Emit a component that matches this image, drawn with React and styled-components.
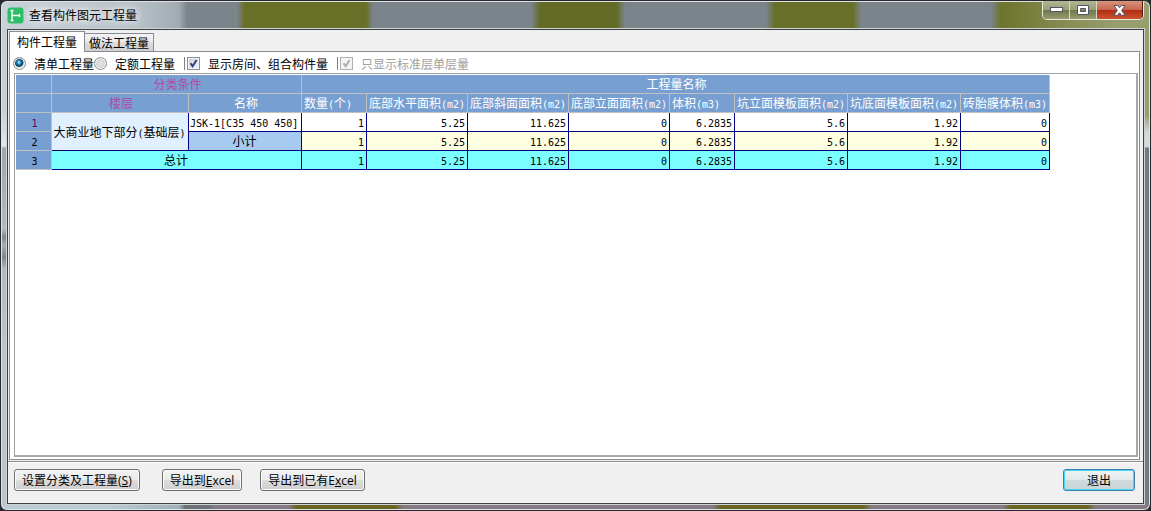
import React, { useState } from "react";
import styled, { createGlobalStyle, css } from "styled-components";

const GlobalStyle = createGlobalStyle`
  * {
    box-sizing: border-box;
  }

  body {
    margin: 0;
    background: #2a2a2a;
    color: #000;
    font-family: "Noto Sans CJK SC", sans-serif;
    font-size: 12px;
    line-height: 18px;
  }

  button,
  input {
    font: inherit;
    margin: 0;
  }
`;

const Window = styled.div`
  display: flex;
  flex-direction: column;
  min-height: 100vh;
  padding: 0 6px 6px;
  border: 1px solid #26282c;
  border-radius: 7px;
  box-shadow: inset 0 0 0 1px #dde3e6;
  background:
    linear-gradient(90deg, #b9cad2 0 110px, #9fb0b8 178px, #6f7274 184px 208px, #857a82 214px 288px, #6a6420 296px 394px, #857a82 402px 712px, #6a6420 720px 862px, #857a82 870px 1002px, #6a6420 1010px 1086px, #857a82 1094px) bottom / 100% 7px no-repeat,
    linear-gradient(180deg, #979d6c 0 86px, #d5d9dc 104px 118px, #727b82 119px) right 28px / 7px 100% no-repeat,
    linear-gradient(180deg, #c3cfd7 0 80px, #e4e8ea 117px, #9ba8b0 119px, #aebbc3 200px, #7d8990 208px, #a3b0b8 216px, #7d8990 228px, #aebbc3 240px, #b9c6cf 320px) left 28px / 7px 100% no-repeat,
    linear-gradient(90deg, #c9d2d9 0, #b5bfc6 140px, #a2abb2 178px, #7b838b 186px 236px, #686f26 244px 365px, #7b838b 372px 530px, #646b26 539px 616px, #7b838b 624px 765px, #686f28 774px 852px, #7b838b 860px 990px, #6d742c 1000px, #979d6c 1110px) top / 100% 28px no-repeat,
    #b9c6cf;
`;

const TitleBar = styled.header`
  display: flex;
  align-items: flex-start;
  justify-content: space-between;
  height: 28px;
`;

const Title = styled.h1`
  display: flex;
  align-items: center;
  gap: 5px;
  height: 28px;
  margin: 0;
  font-size: 12px;
  font-weight: 400;
  text-shadow: 0 0 8px #fff, 0 0 8px #fff;
`;

const CaptionButtons = styled.div`
  display: flex;
  border: 1px solid #e8ebdc;
  border-top: 0;
  border-radius: 0 0 5px 5px;
  overflow: hidden;
`;

const CaptionButton = styled.button`
  display: flex;
  align-items: center;
  justify-content: center;
  width: ${props => (props.$close ? 46 : 27)}px;
  height: 18px;
  padding: 0;
  border: 0;
  border-right: 1px solid ${props => (props.$close ? "#5b1a10" : "#d6dac2")};
  background: ${props =>
    props.$close
      ? "linear-gradient(#d9937f, #c7664c 50%, #ad2f12 50%, #d0512e)"
      : "linear-gradient(#b2b694, #989d75 50%, #70754a 50%, #979c70)"};
`;

const Client = styled.main`
  display: flex;
  flex: 1;
  flex-direction: column;
  border: 1px solid #3c4143;
  box-shadow: 0 0 0 1px #ccd3d3;
  background: #f0f0f0;
`;

const Tabs = styled.div`
  display: flex;
  align-items: flex-end;
  height: 21px;
  padding: 0 1px;
`;

const Tab = styled.button`
  position: relative;
  height: 18px;
  padding: 0 4px;
  border: 1px solid #898c95;
  border-bottom: 0;
  border-left: 0;
  background: linear-gradient(#f2f2f2, #ebebeb 50%, #dddddd 50%, #cfcfcf);

  ${props =>
    props.$active &&
    css`
      z-index: 1;
      height: 21px;
      margin-bottom: -1px;
      padding: 0 7px;
      border-left: 1px solid #898c95;
      background: #fff;
    `}
`;

const Panel = styled.section`
  display: flex;
  flex: 1;
  flex-direction: column;
  margin: 0 3px 1px 1px;
  padding: 0 1px 2px 3px;
  border: 1px solid #898c95;
  background: #fff;
`;

const Options = styled.div`
  display: flex;
  align-items: center;
  height: 21px;
  padding-top: 2px;
`;

const Option = styled.label`
  display: flex;
  align-items: center;
  gap: 8px;
  color: ${props => (props.$disabled ? "#a0a0a0" : "#000")};
`;

const Radio = styled.input`
  appearance: none;
  width: 13px;
  height: 13px;
  border: 1px solid #8e8f8f;
  border-radius: 50%;
  background: radial-gradient(#e4e4e4, #c9ccce);
  box-shadow: inset 0 0 0 1px #f4f4f4;

  &:checked {
    background: radial-gradient(circle at 45% 40%, #7fd0f2 0 1px, #1b7db5 2px, #123a5e 4px, #dfe3e6 5px);
  }
`;

const Checkbox = styled.input`
  appearance: none;
  width: 13px;
  height: 13px;
  border: 1px solid #8e8f8f;
  background: linear-gradient(135deg, #c9cdd3, #f6f6f6);
  box-shadow: inset 0 0 0 1px #f4f4f4;

  &:checked {
    background:
      url("data:image/svg+xml,%3Csvg xmlns='http://www.w3.org/2000/svg' viewBox='0 0 11 11'%3E%3Cpath d='M2.5 5.2 4.6 8.2 8.6 2' fill='none' stroke='%23303f8c' stroke-width='2'/%3E%3C/svg%3E"),
      linear-gradient(135deg, #c9cdd3, #f6f6f6);
  }

  &:disabled {
    border-color: #b1b1b1;
    background:
      url("data:image/svg+xml,%3Csvg xmlns='http://www.w3.org/2000/svg' viewBox='0 0 11 11'%3E%3Cpath d='M2.5 5.2 4.6 8.2 8.6 2' fill='none' stroke='%23b0b0b0' stroke-width='2'/%3E%3C/svg%3E"),
      #f4f4f4;
  }
`;

const Divider = styled.span`
  width: 1px;
  height: 13px;
  margin: 0 2px 0 9px;
  background: #808080;
`;

const GridFrame = styled.div`
  flex: 1;
  margin-left: 1px;
  padding: 1px;
  border: 1px solid #a0a0a0;
  border-right: 2px solid #a9a9a9;
  border-bottom: 2px solid #a9a9a9;
`;

const Table = styled.table`
  width: 1034px;
  table-layout: fixed;
  border-collapse: separate;
  border-spacing: 0;
  line-height: 16px;
`;

const Col = styled.col`
  width: ${props => props.$width}px;
`;

const HeadCell = styled.th`
  height: 19px;
  padding: 0 0 0 2px;
  overflow: hidden;
  border-right: 1px solid #c0c0c0;
  border-bottom: 1px solid #c0c0c0;
  background: #789fd2;
  color: ${props => props.$color || "#fff"};
  font-weight: 400;
  text-align: ${props => props.$align || "center"};
  white-space: nowrap;
`;

const Cell = styled.td`
  height: 19px;
  padding: 0 2px 0 1px;
  overflow: hidden;
  border-right: 1px solid #000080;
  border-bottom: 1px solid #000080;
  background: ${props => props.$bg || "#fff"};
  text-align: ${props => props.$align || "center"};
  white-space: nowrap;
`;

const Mono = styled.span`
  font-family: "DejaVu Sans Mono", monospace;
  font-size: 10px;
  line-height: 12px;
`;

const Footer = styled.footer`
  display: flex;
  align-items: flex-start;
  justify-content: space-between;
  height: 42px;
  padding: 7px 8px 0 6px;
  border-top: 1px solid #8c8c8c;
  box-shadow: inset 0 1px 0 #fff;
`;

const ButtonGroup = styled.div`
  display: flex;
  gap: ${props => props.$gap}px;
`;

const Button = styled.button`
  height: 22px;
  padding: 0 7px;
  border: 1px solid #707070;
  border-radius: 3px;
  background: linear-gradient(#f2f2f2, #ebebeb 50%, #dddddd 50%, #cfcfcf);
  box-shadow: inset 0 0 0 1px #fafafa;
  line-height: 20px;
  white-space: nowrap;

  ${props =>
    props.$primary &&
    css`
      padding: 0 23px;
      border-color: #3c7fb1;
      box-shadow: inset 0 0 0 1px #46d8fb;
      background: linear-gradient(#eef2f3, #e3eaec 50%, #d0dadd 50%, #cbd5d8);
    `}
`;

const Latin = styled.span`
  font-family: "Open Sans", sans-serif;
`;

const columns = [
  { name: "数量", unit: "个", width: 65 },
  { name: "底部水平面积", unit: <Mono>m2</Mono>, width: 101 },
  { name: "底部斜面面积", unit: <Mono>m2</Mono>, width: 101 },
  { name: "底部立面面积", unit: <Mono>m2</Mono>, width: 101 },
  { name: "体积", unit: <Mono>m3</Mono>, width: 65 },
  { name: "坑立面模板面积", unit: <Mono>m2</Mono>, width: 113 },
  { name: "坑底面模板面积", unit: <Mono>m2</Mono>, width: 113 },
  { name: "砖胎膜体积", unit: <Mono>m3</Mono>, width: 89 }
];

const amounts = ["1", "5.25", "11.625", "0", "6.2835", "5.6", "1.92", "0"];

const Amounts = ({ bg }) =>
  amounts.map((amount, i) => (
    <Cell key={columns[i].name} $bg={bg} $align="right">
      <Mono>{amount}</Mono>
    </Cell>
  ));

const AppIcon = () => (
  <svg width="17" height="17" viewBox="0 0 17 17" aria-hidden="true">
    <rect x="0.5" y="0.5" width="16" height="16" rx="3" fill="#2cbf68" />
    <path
      d="M5 3v11M5 8.5h7"
      fill="none"
      stroke="#fff"
      strokeWidth="1.4"
    />
    <path d="M3.5 3.5h3M3.5 13.5h3M12.5 7v3" stroke="#fff" strokeWidth="1.4" />
  </svg>
);

const QuantityTable = () => (
  <Table>
    <colgroup>
      <Col $width={36} />
      <Col $width={137} />
      <Col $width={113} />
      {columns.map(column => (
        <Col key={column.name} $width={column.width} />
      ))}
    </colgroup>
    <thead>
      <tr>
        <HeadCell />
        <HeadCell colSpan={2} $color="#b04aa4">
          分类条件
        </HeadCell>
        <HeadCell colSpan={8}>工程量名称</HeadCell>
      </tr>
      <tr>
        <HeadCell />
        <HeadCell $color="#b04aa4">楼层</HeadCell>
        <HeadCell>名称</HeadCell>
        {columns.map(column => (
          <HeadCell key={column.name} $align="left">
            {column.name}
            <Mono>(</Mono>
            {column.unit}
            <Mono>)</Mono>
          </HeadCell>
        ))}
      </tr>
    </thead>
    <tbody>
      <tr>
        <HeadCell scope="row" $color="#60005c">
          <Mono>1</Mono>
        </HeadCell>
        <Cell rowSpan={2} $bg="#e0f0ff">
          大商业地下部分<Mono>(</Mono>基础层<Mono>)</Mono>
        </Cell>
        <Cell $align="left">
          <Mono>JSK-1[C35 450 450]</Mono>
        </Cell>
        <Amounts />
      </tr>
      <tr>
        <HeadCell scope="row" $color="#000">
          <Mono>2</Mono>
        </HeadCell>
        <Cell $bg="#a6caf0">小计</Cell>
        <Amounts bg="#ffffe1" />
      </tr>
      <tr>
        <HeadCell scope="row" $color="#000">
          <Mono>3</Mono>
        </HeadCell>
        <Cell colSpan={2} $bg="#7bfffe">
          总计
        </Cell>
        <Amounts bg="#7bfffe" />
      </tr>
    </tbody>
  </Table>
);

const App = () => {
  const [tab, setTab] = useState("component");
  const [mode, setMode] = useState("list");
  const [showRooms, setShowRooms] = useState(true);

  return (
    <>
      <GlobalStyle />
      <Window>
        <TitleBar>
          <Title>
            <AppIcon />
            查看构件图元工程量
          </Title>
          <CaptionButtons>
            <CaptionButton aria-label="最小化">
              <svg width="13" height="6" viewBox="0 0 13 6">
                <rect x="0.5" y="0.5" width="12" height="4" fill="#fff" stroke="#53566b" />
              </svg>
            </CaptionButton>
            <CaptionButton aria-label="最大化">
              <svg width="12" height="10" viewBox="0 0 12 10">
                <path
                  d="M.5.5h11v9H.5zM3.5 3.5v3h5v-3z"
                  fill="#fff"
                  fillRule="evenodd"
                  stroke="#53566b"
                />
              </svg>
            </CaptionButton>
            <CaptionButton $close aria-label="关闭">
              <svg width="13" height="11" viewBox="0 0 13 11">
                <path
                  d="M1 .5h3.5l2 2.3 2-2.3H12L8.7 5.3l3.3 5H8.5l-2-2.5-2 2.5H1l3.3-5z"
                  fill="#fff"
                  stroke="#53566b"
                />
              </svg>
            </CaptionButton>
          </CaptionButtons>
        </TitleBar>

        <Client>
          <Tabs role="tablist">
            <Tab
              role="tab"
              aria-selected={tab === "component"}
              $active={tab === "component"}
              onClick={() => setTab("component")}
            >
              构件工程量
            </Tab>
            <Tab
              role="tab"
              aria-selected={tab === "method"}
              $active={tab === "method"}
              onClick={() => setTab("method")}
            >
              做法工程量
            </Tab>
          </Tabs>

          <Panel>
            <Options>
              <Option htmlFor="mode-list">
                <Radio
                  id="mode-list"
                  name="mode"
                  type="radio"
                  checked={mode === "list"}
                  onChange={() => setMode("list")}
                />
                清单工程量
              </Option>
              <Option htmlFor="mode-quota">
                <Radio
                  id="mode-quota"
                  name="mode"
                  type="radio"
                  checked={mode === "quota"}
                  onChange={() => setMode("quota")}
                />
                定额工程量
              </Option>
              <Divider />
              <Option htmlFor="show-rooms">
                <Checkbox
                  id="show-rooms"
                  type="checkbox"
                  checked={showRooms}
                  onChange={e => setShowRooms(e.target.checked)}
                />
                显示房间、组合构件量
              </Option>
              <Divider />
              <Option htmlFor="single-floor" $disabled>
                <Checkbox id="single-floor" type="checkbox" checked disabled readOnly />
                只显示标准层单层量
              </Option>
            </Options>
            <GridFrame>
              <QuantityTable />
            </GridFrame>
          </Panel>

          <Footer>
            <ButtonGroup $gap={22}>
              <Button>
                设置分类及工程量
                <Latin>
                  (<u>S</u>)
                </Latin>
              </Button>
              <ButtonGroup $gap={18}>
                <Button>
                  导出到
                  <Latin>
                    <u>E</u>xcel
                  </Latin>
                </Button>
                <Button>
                  导出到已有
                  <Latin>
                    E<u>x</u>cel
                  </Latin>
                </Button>
              </ButtonGroup>
            </ButtonGroup>
            <Button $primary>退出</Button>
          </Footer>
        </Client>
      </Window>
    </>
  );
};

export default App;
